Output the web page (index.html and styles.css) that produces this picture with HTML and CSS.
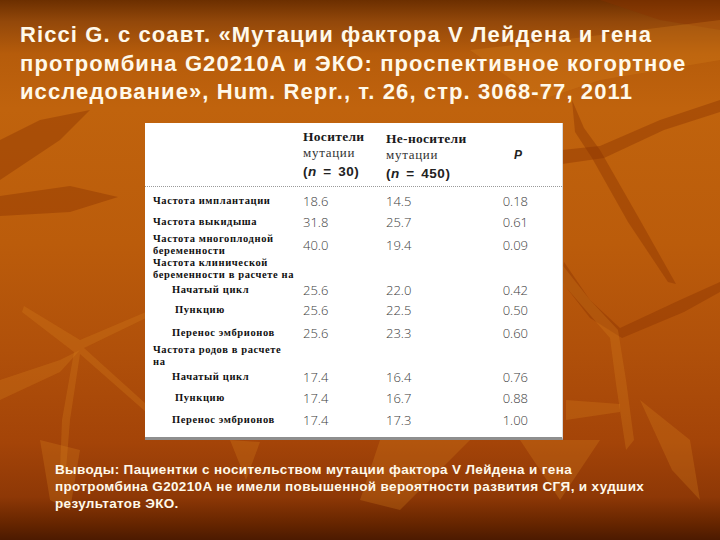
FILE: index.html
```html
<!DOCTYPE html>
<html lang="ru">
<head>
<meta charset="utf-8">
<title>Ricci G. — Мутации фактора V Лейдена и ЭКО</title>
<link rel="stylesheet" href="styles.css">
</head>
<body>
<div class="slide">
  <svg class="bg" viewBox="0 0 720 540" width="720" height="540" aria-hidden="true">
    <g class="dark">
      <path d="M572 100 L584 128 L600 150 L640 220 L676 284 L668 282 L628 222 L592 158 L575 132 Z"/>
      <path d="M562 150 L600 146 L660 120 L720 100 L720 112 L664 130 L604 158 L562 164 Z"/>
      <path d="M564 262 L590 300 L620 328 L680 300 L720 282 L720 292 L684 312 L622 338 L590 318 L562 282 Z"/>
      <path d="M0 196 L70 186 L118 197 L70 212 L0 216 Z"/>
      <path d="M0 140 L40 120 L90 110 L60 140 L0 180 Z"/>
      <path d="M600 0 L720 0 L720 30 L660 20 Z"/>
    </g>
    <g class="light">
      <path d="M24 306 L80 340 L146 312 L146 318 L84 348 L146 404 L146 412 L80 354 L70 420 L66 470 L60 470 L62 420 L74 352 L22 312 Z"/>
      <path d="M560 262 L590 300 L618 330 L626 380 L634 440 L626 450 L616 384 L610 338 L584 308 L558 278 Z"/>
      <path d="M0 380 L60 360 L80 350 L60 372 L0 400 Z"/>
      <path d="M566 400 L620 404 L620 412 L566 420 Z"/>
      <path d="M640 400 L690 440 L700 500 L672 470 Z"/>
      <path d="M40 440 L80 450 L70 510 L50 500 Z"/>
      <path d="M230 440 L260 442 L246 480 Z"/>
      <path d="M380 440 L470 440 L400 510 L360 500 Z"/>
      <path d="M520 440 L600 440 L560 500 Z"/>
      <path d="M470 50 L560 40 L720 20 L720 60 L600 80 L540 100 Z"/>
    </g>
  </svg>

  <h1 class="title">Ricci G. с соавт. «Мутации фактора V Лейдена и гена<br>протромбина G20210A и ЭКО: проспективное когортное<br>исследование», Hum. Repr., т. 26, стр. 3068-77, 2011</h1>

  <div class="card">
    <div class="thead">
      <div class="hcell"></div>
      <div class="hcell">
        <span class="h1">Носители</span>
        <span class="h2">мутации</span>
        <span class="h3">(<i>n</i> = 30)</span>
      </div>
      <div class="hcell hcell-shift">
        <span class="h1">Не-носители</span>
        <span class="h2">мутации</span>
        <span class="h3">(<i>n</i> = 450)</span>
      </div>
      <div class="hcell hcell-p"><span class="pval">P</span></div>
    </div>
    <div class="rule"></div>
    <div class="tbody">
      <div class="lab">Частота имплантации</div><div class="num">18.6</div><div class="num">14.5</div><div class="num r">0.18</div>
      <div class="lab">Частота выкидыша</div><div class="num">31.8</div><div class="num">25.7</div><div class="num r">0.61</div>
      <div class="lab">Частота многоплодной<br>беременности</div><div class="num">40.0</div><div class="num">19.4</div><div class="num r">0.09</div>
      <div class="lab">Частота клинической<br>беременности в расчете на</div><div></div><div></div><div></div>
      <div class="lab sub">Начатый цикл</div><div class="num">25.6</div><div class="num">22.0</div><div class="num r">0.42</div>
      <div class="lab sub sub2">Пункцию</div><div class="num">25.6</div><div class="num">22.5</div><div class="num r">0.50</div>
      <div class="lab sub">Перенос эмбрионов</div><div class="num">25.6</div><div class="num">23.3</div><div class="num r">0.60</div>
      <div class="lab">Частота родов в расчете<br>на</div><div></div><div></div><div></div>
      <div class="lab sub">Начатый цикл</div><div class="num">17.4</div><div class="num">16.4</div><div class="num r">0.76</div>
      <div class="lab sub sub2">Пункцию</div><div class="num">17.4</div><div class="num">16.7</div><div class="num r">0.88</div>
      <div class="lab sub">Перенос эмбрионов</div><div class="num">17.4</div><div class="num">17.3</div><div class="num r">1.00</div>
    </div>
  </div>

  <p class="conclusion">Выводы: Пациентки с носительством мутации фактора V Лейдена и гена<br>протромбина G20210A не имели повышенной вероятности развития СГЯ, и худших<br>результатов ЭКО.</p>
</div>
</body>
</html>
```

FILE: styles.css
```css
html, body {
  margin: 0;
  padding: 0;
}

body {
  width: 720px;
  height: 540px;
  overflow: hidden;
  font-family: "Liberation Sans", Arial, sans-serif;
}

.slide {
  position: relative;
  width: 720px;
  height: 540px;
  overflow: hidden;
  display: flex;
  flex-direction: column;
  background: linear-gradient(180deg,
    #6c2f00 0%,
    #93480a 4%,
    #b65c0b 10%,
    #c0630d 20%,
    #bb5c0b 45%,
    #b0500a 65%,
    #a44408 82%,
    #8e3806 92%,
    #662500 97%,
    #4c1a00 100%);
}

.bg {
  position: absolute;
  left: 0;
  top: 0;
  z-index: 0;
}

.bg .dark path {
  fill: #8a3300;
  opacity: 0.4;
}

.bg .light path {
  fill: #d8821e;
  opacity: 0.28;
}

.title,
.card,
.conclusion {
  position: relative;
  z-index: 1;
}

.title {
  margin: 21px 0 0 20px;
  font-size: 22px;
  line-height: 28.5px;
  font-weight: bold;
  color: #fff9ea;
  white-space: nowrap;
  letter-spacing: 1.1px;
}

.card {
  margin: 16px 0 0 145px;
  width: 418px;
  height: 317px;
  box-sizing: border-box;
  background: #ffffff;
  border-bottom: 3px solid #8e8e8e;
  border-right: 1px solid #d8d8d8;
  display: flex;
  flex-direction: column;
}

.thead,
.tbody {
  display: grid;
  grid-template-columns: 150px 83px 100px 42px;
  padding-left: 8px;
}

.thead {
  height: 63px;
  box-sizing: border-box;
  padding-top: 6px;
}

.hcell {
  display: flex;
  flex-direction: column;
  color: #1a1a1a;
}

.hcell-shift {
  padding-top: 2px;
}

.h1 {
  font-family: "Liberation Serif", "Times New Roman", serif;
  font-weight: bold;
  font-size: 13.5px;
  line-height: 16px;
  letter-spacing: 0.3px;
}

.h2 {
  font-family: "Liberation Serif", "Times New Roman", serif;
  font-size: 13px;
  line-height: 16px;
  letter-spacing: 0.7px;
  color: #333;
}

.h3 {
  font-family: "Liberation Sans", Arial, sans-serif;
  font-weight: bold;
  font-size: 13.5px;
  line-height: 18px;
  margin-top: 2px;
  letter-spacing: 0.6px;
  word-spacing: 2px;
  color: #222;
}

.h3 i {
  font-style: italic;
}

.hcell-p {
  justify-content: flex-start;
  align-items: flex-end;
  padding-top: 18px;
  padding-right: 6px;
}

.pval {
  font-family: "Liberation Sans", Arial, sans-serif;
  font-weight: bold;
  font-style: italic;
  font-size: 12px;
  line-height: 16px;
  color: #222;
}

.rule {
  height: 0;
  border-top: 1px dotted #9a9a9a;
}

.tbody {
  padding-top: 5px;
  grid-template-rows: 19.5px 22px 24.5px 22px 20px 21.5px 23.5px 22px 20.5px 21.5px 22px;
  align-items: center;
}

.lab {
  font-family: "Liberation Serif", "Times New Roman", serif;
  font-weight: bold;
  font-size: 10.5px;
  line-height: 12px;
  letter-spacing: 0.6px;
  color: #111;
  white-space: nowrap;
}

.lab.sub {
  padding-left: 19px;
}

.lab.sub2 {
  padding-left: 22px;
}

.num {
  font-family: "Open Sans", "DejaVu Sans", sans-serif;
  font-weight: 300;
  font-size: 13px;
  line-height: 16px;
  color: #3c3c3c;
}

.num.r {
  text-align: right;
}

.conclusion {
  margin: 21px 0 0 55px;
  font-size: 13.5px;
  line-height: 17px;
  font-weight: bold;
  color: #fff9ea;
  white-space: nowrap;
  letter-spacing: 0.35px;
}
```
